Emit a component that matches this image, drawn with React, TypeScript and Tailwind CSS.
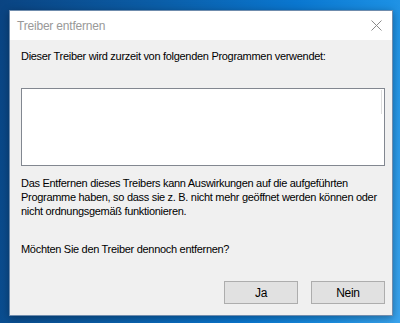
export default function App() {
  return (
    <div
      className="w-[400px] h-[323px] overflow-hidden pt-[10px] pl-[9px] bg-[linear-gradient(100deg,#0a4482_0%,#0b5ea8_35%,#0a77d0_65%,#1b8fe3_85%,#3aa4ee_100%)]"
      style={{ fontFamily: '"Liberation Sans", Arial, sans-serif' }}
    >
      <div className="w-[384px] h-[306px] flex flex-col bg-[#f0f0f0] border border-[#6f8cad] shadow-[0_2px_8px_rgba(0,0,0,0.35)]">
        {/* Title bar */}
        <div className="h-[29px] bg-white flex items-center justify-between pl-[7px] pr-[9px] shrink-0">
          <span className="text-[12px] tracking-[-0.2px] text-[#999999]">Treiber entfernen</span>
          <svg width="11" height="11" viewBox="0 0 11 11" className="mr-[1px]">
            <path d="M0.5 0.5 L10.5 10.5 M10.5 0.5 L0.5 10.5" stroke="#8a8a8a" strokeWidth="1" />
          </svg>
        </div>
        {/* Body */}
        <div className="flex flex-col flex-1 pl-[11px] pr-[9px] text-[11px] tracking-[-0.3px] leading-[14px] text-black whitespace-nowrap">
          <p className="mt-[9px]">Dieser Treiber wird zurzeit von folgenden Programmen verwendet:</p>
          <div className="mt-[25px] w-[364px] h-[78px] bg-white border border-[#828790] flex justify-end">
            <div className="w-[1px] h-[24px] bg-[#dcdcdc] mt-[1px] mr-[2px]" />
          </div>
          <p className="mt-[10px] w-[364px]">
            Das Entfernen dieses Treibers kann Auswirkungen auf die aufgeführten
            <br />
            Programme haben, so dass sie z. B. nicht mehr geöffnet werden können oder
            <br />
            nicht ordnungsgemäß funktionieren.
          </p>
          <p className="mt-[24px]">Möchten Sie den Treiber dennoch entfernen?</p>
          <div className="mt-[25px] flex justify-end gap-[13px] w-[364px]">
            <button className="w-[74px] h-[23px] bg-[#e1e1e1] border border-[#adadad] text-[12px] text-black">Ja</button>
            <button className="w-[74px] h-[23px] bg-[#e1e1e1] border border-[#adadad] text-[12px] text-black">Nein</button>
          </div>
        </div>
      </div>
    </div>
  );
}
